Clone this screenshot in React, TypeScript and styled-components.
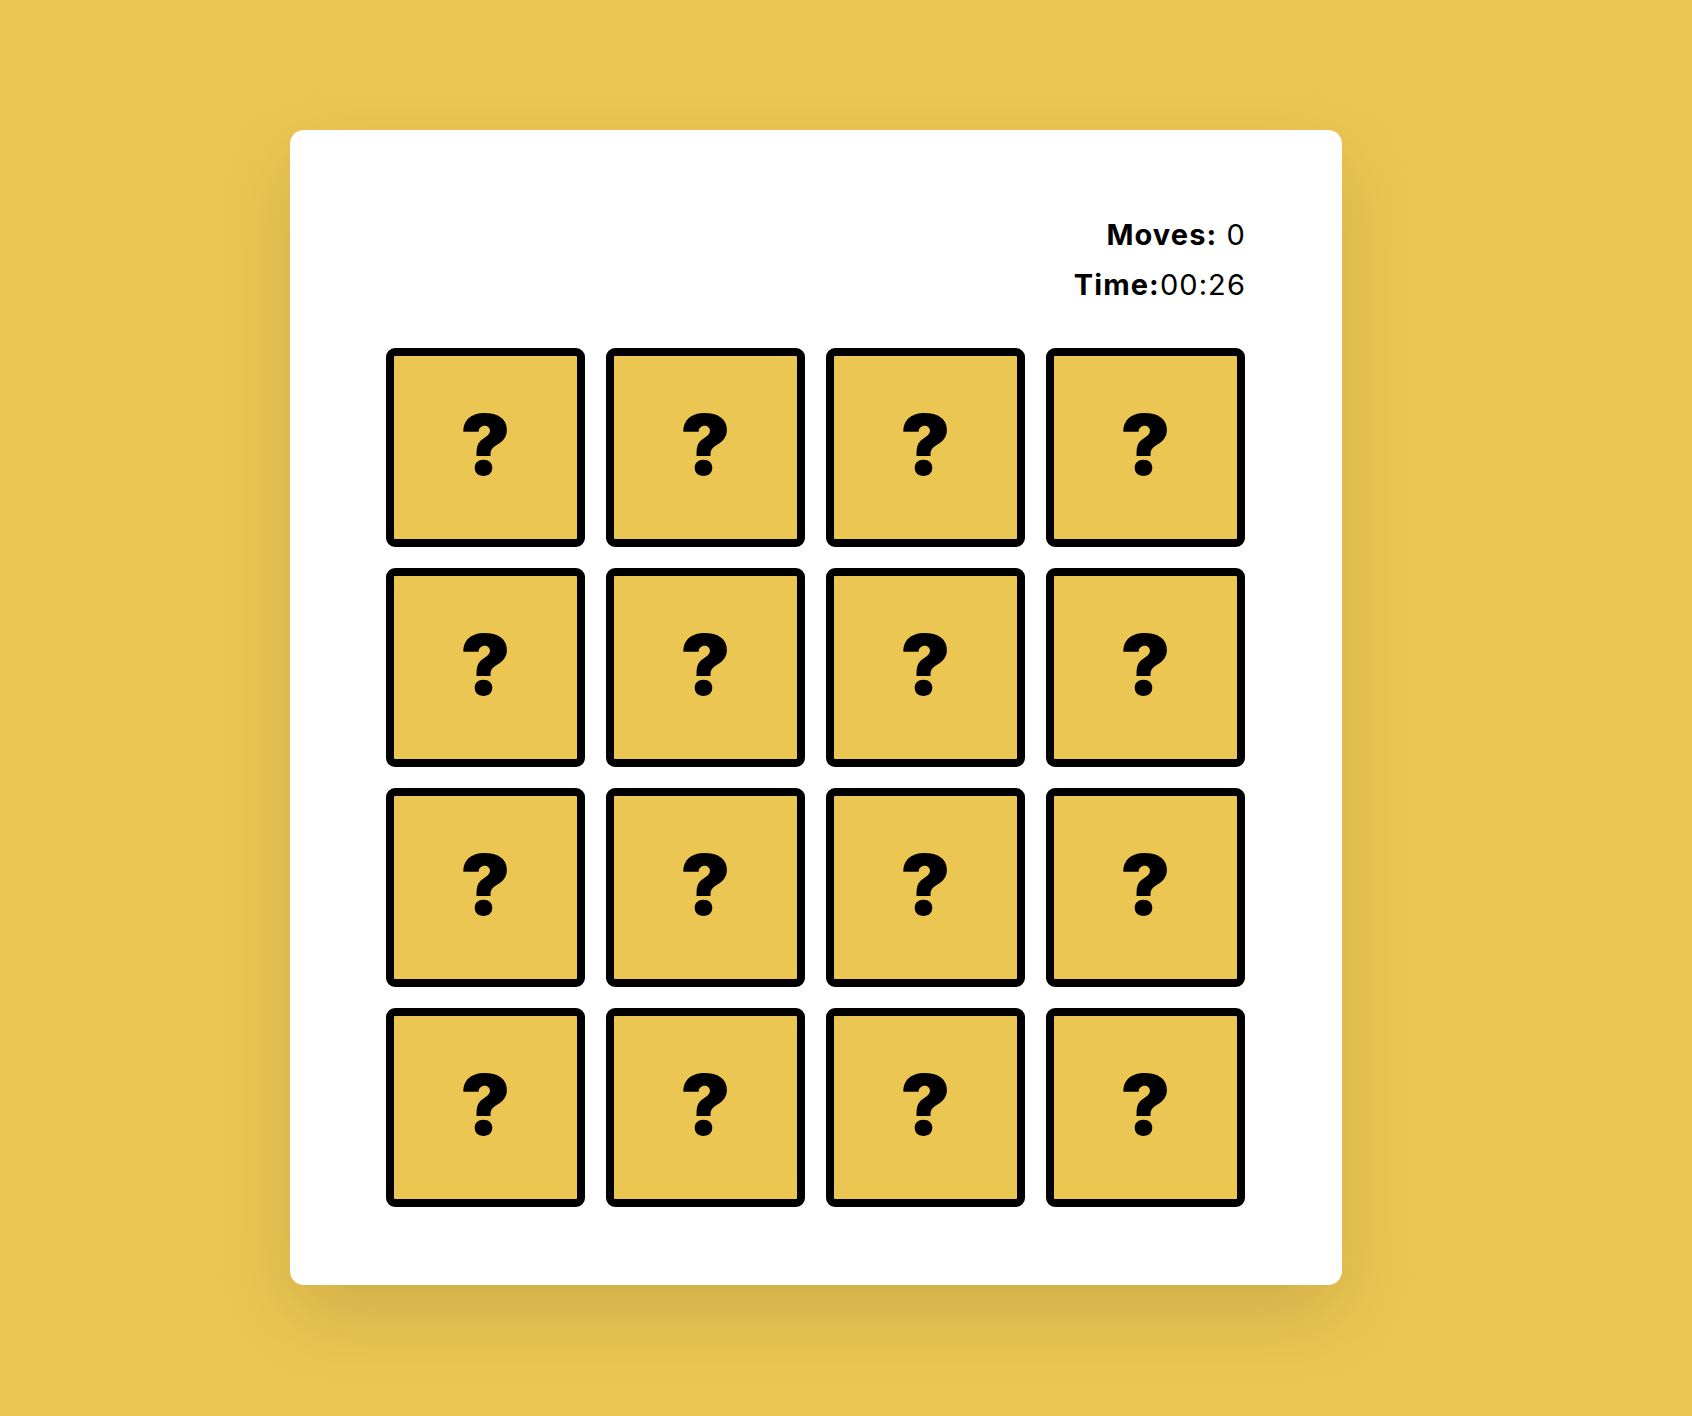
import React from "react";
import styled, { createGlobalStyle } from "styled-components";

const Global = createGlobalStyle`
  html, body { margin: 0; padding: 0; }
  body {
    background: #ecc653;
    font-family: "Inter", "Liberation Sans", sans-serif;
    color: #000;
  }
`;

const Page = styled.div`
  min-height: 100vh;
  box-sizing: border-box;
  padding: 130px 0 131px 290px;
  display: flex;
  align-items: flex-start;
`;

const Board = styled.main`
  width: 1052px;
  box-sizing: border-box;
  background: #fff;
  border-radius: 14px;
  box-shadow: 0 30px 80px rgba(0, 0, 0, 0.12);
  padding: 80px 96px 78px 96px;
  display: flex;
  flex-direction: column;
`;

const Stats = styled.div`
  display: flex;
  flex-direction: column;
  align-items: flex-end;
`;

const Stat = styled.div`
  font-size: 29px;
  line-height: 50px;
  font-weight: 400;
  letter-spacing: 1.1px;
`;

const Label = styled.span`
  font-weight: 700;
`;

const Grid = styled.div`
  margin-top: 38px;
  display: grid;
  grid-template-columns: repeat(4, 199px);
  grid-auto-rows: 199px;
  gap: 21px;
`;

const Tile = styled.button`
  box-sizing: border-box;
  width: 199px;
  height: 199px;
  padding: 0;
  margin: 0;
  background: #ecc653;
  border: 8px solid #000;
  border-radius: 9px;
  display: flex;
  align-items: center;
  justify-content: center;
  font-family: "Inter", "Liberation Sans", sans-serif;
  font-weight: 900;
  font-size: 84px;
  line-height: 1;
  color: #000;
  cursor: pointer;
`;

const Mark = styled.span`
  display: block;
  transform: translateY(-3px);
`;

export default function App() {
  const tiles = Array.from({ length: 16 }, (_, i) => i);
  return (
    <>
      <Global />
      <Page>
        <Board>
          <Stats>
            <Stat>
              <Label>Moves:</Label> 0
            </Stat>
            <Stat>
              <Label>Time:</Label>00:26
            </Stat>
          </Stats>
          <Grid>
            {tiles.map((i) => (
              <Tile key={i}>
                <Mark>?</Mark>
              </Tile>
            ))}
          </Grid>
        </Board>
      </Page>
    </>
  );
}
